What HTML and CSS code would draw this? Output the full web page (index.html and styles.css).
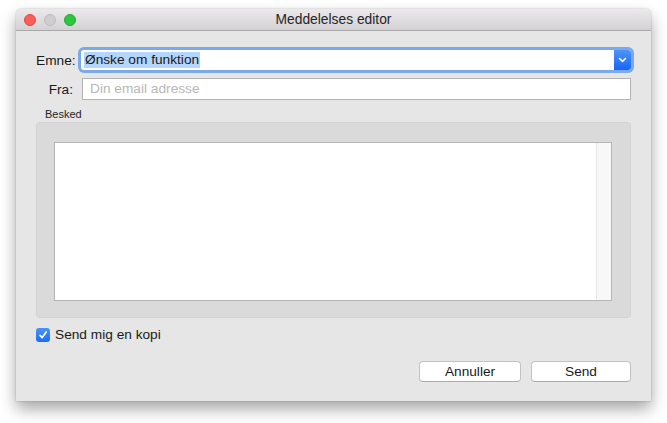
FILE: index.html
```html
<!DOCTYPE html>
<html lang="da">

<head>
    <meta charset="UTF-8">
    <title>Meddelelses editor</title>
    <link rel="stylesheet" href="styles.css">
</head>

<body>
    <div class="window">
        <div class="titlebar">
            <div class="lights">
                <span class="light red"></span>
                <span class="light gray"></span>
                <span class="light green"></span>
            </div>
            <div class="title">Meddelelses editor</div>
        </div>

        <div class="content">
            <div class="form-grid">
                <label class="field-label">Emne:</label>
                <div class="combo">
                    <span class="combo-text"><span class="selected">Ønske om funktion</span></span>
                    <span class="combo-arrow">
                        <svg width="9" height="6" viewBox="0 0 9 6">
                            <path d="M1.5 1.5 L4.5 4.3 L7.5 1.5" fill="none" stroke="#fff" stroke-width="1.6" stroke-linecap="round" stroke-linejoin="round"/>
                        </svg>
                    </span>
                </div>

                <label class="field-label">Fra:</label>
                <div class="text-field">Din email adresse</div>
            </div>

            <div class="group-title">Besked</div>
            <div class="group-box">
                <div class="text-area">
                    <div class="text-body"></div>
                    <div class="scroll-track"></div>
                </div>
            </div>

            <div class="check-row">
                <span class="checkbox">
                    <svg width="10" height="10" viewBox="0 0 10 10">
                        <path d="M2 5.3 L4.2 7.6 L8.2 2" fill="none" stroke="#fff" stroke-width="1.7" stroke-linecap="round" stroke-linejoin="round"/>
                    </svg>
                </span>
                <span class="check-label">Send mig en kopi</span>
            </div>

            <div class="buttons">
                <button class="push-button cancel">Annuller</button>
                <button class="push-button send">Send</button>
            </div>
        </div>
    </div>
</body>
</html>
```

FILE: styles.css
```css
html {
    background-color: #ffffff;
}

body {
    margin: 0;
    padding: 9px 0 22px 16px;
    font-family: "Liberation Sans", Arial, sans-serif;
    font-size: 13.7px;
    color: #1a1a1a;
}

.window {
    width: 635px;
    height: 392px;
    background-color: #e6e6e6;
    border-radius: 5px 5px 0 0;
    box-shadow: 0 8px 16px rgba(0, 0, 0, 0.35), 0 0 2px rgba(0, 0, 0, 0.25);
    overflow: hidden;
    display: flex;
    flex-direction: column;
}

.titlebar {
    height: 21px;
    flex-shrink: 0;
    background: linear-gradient(#ebe9eb, #d3d1d3);
    border-bottom: 1px solid #a9a9a9;
    display: flex;
    align-items: center;
    position: relative;
}

.lights {
    display: flex;
    gap: 8px;
    padding-left: 8px;
}

.light {
    width: 12px;
    height: 12px;
    border-radius: 50%;
    box-sizing: border-box;
}

.light.red {
    background-color: #fc5f57;
    border: 1px solid #df4744;
}

.light.gray {
    background-color: #cfcecf;
    border: 1px solid #bcbbbc;
}

.light.green {
    background-color: #2ac840;
    border: 1px solid #22a732;
}

.title {
    position: absolute;
    left: 0;
    right: 0;
    text-align: center;
    font-size: 13.8px;
    color: #262626;
}

.content {
    padding: 19px 20px 0 20px;
    display: flex;
    flex-direction: column;
}

.form-grid {
    display: grid;
    grid-template-columns: 38px 1fr;
    column-gap: 8px;
    row-gap: 8px;
    align-items: center;
}

.field-label {
    text-align: right;
    color: #1a1a1a;
    margin-right: 1px;
}

.combo {
    height: 20px;
    background-color: #ffffff;
    border-radius: 3px;
    box-shadow: 0 0 0 3px #7ba9ec;
    display: flex;
    align-items: stretch;
    margin-left: -1px;
}

.combo-text {
    flex: 1;
    display: flex;
    align-items: center;
    padding-left: 3px;
}

.selected {
    background-color: #b3d5fe;
    line-height: 16px;
    padding: 0 1px;
}

.combo-arrow {
    width: 17px;
    background: linear-gradient(#4d94fb, #1766f5);
    border-radius: 0 3px 3px 0;
    display: flex;
    align-items: center;
    justify-content: center;
}

.text-field {
    height: 22px;
    box-sizing: border-box;
    background-color: #ffffff;
    border: 1px solid #b4b4b4;
    padding: 0 7px;
    line-height: 20px;
    color: #b7b7b7;
}

.group-title {
    font-size: 11px;
    color: #1f1f1f;
    padding: 8px 0 0 9px;
    height: 14px;
}

.group-box {
    height: 196px;
    box-sizing: border-box;
    background-color: #dadada;
    border: 1px solid #d2d2d2;
    border-radius: 4px;
    padding: 19px 18px 16px 17px;
}

.text-area {
    height: 100%;
    box-sizing: border-box;
    border: 1px solid #b6b6b6;
    background-color: #ffffff;
    display: flex;
}

.text-body {
    flex: 1;
}

.scroll-track {
    width: 14px;
    background-color: #f8f8f8;
    border-left: 1px solid #e6e6e6;
}

.check-row {
    display: flex;
    align-items: center;
    gap: 5px;
    margin-top: 9px;
}

.checkbox {
    width: 14px;
    height: 14px;
    border-radius: 3px;
    background: linear-gradient(#4b93fb, #1a6cf5);
    display: flex;
    align-items: center;
    justify-content: center;
}

.buttons {
    display: flex;
    justify-content: flex-end;
    gap: 10px;
    margin-top: 19px;
}

.push-button {
    height: 21px;
    box-sizing: border-box;
    background-color: #ffffff;
    border: 1px solid #c2c2c2;
    border-bottom-color: #acacac;
    border-radius: 4px;
    font-family: "Liberation Sans", Arial, sans-serif;
    font-size: 13.7px;
    color: #1a1a1a;
    padding: 0;
}

.push-button.cancel {
    width: 102px;
}

.push-button.send {
    width: 100px;
}
```
